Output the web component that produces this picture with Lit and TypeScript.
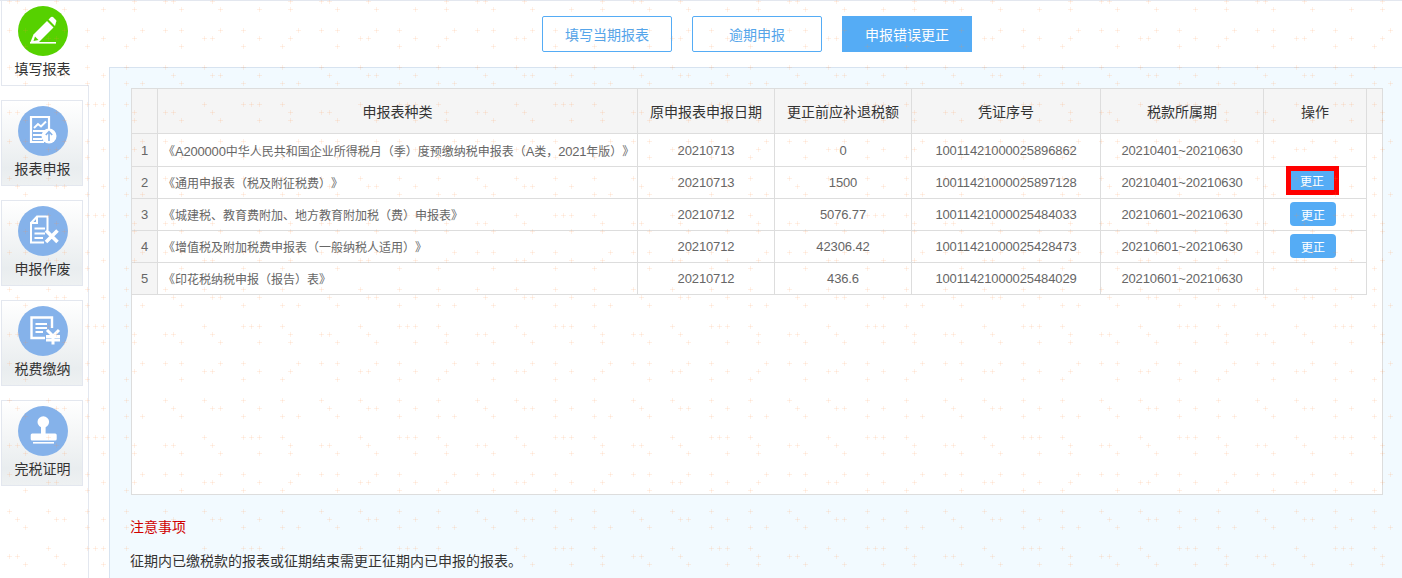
import { LitElement, html, css, svg } from "lit";
import { customElement } from "lit/decorators.js";

const MARKS: [number, number[]][] = [
  [1, [47, 78, 86, 125]],
  [9, [16, 47, 94, 133]],
  [30, [0, 55, 78, 94, 133]],
  [38, [16, 47, 117, 125]],
  [46, [0, 39, 94]],
  [67, [0, 39, 78, 117]],
  [75, [16, 86, 125, 133]],
  [83, [0, 39, 55, 94]],
  [104, [0, 8, 16, 39, 117]],
];

const ICONS = {
  pencil: svg`
    <rect x="12" y="36" width="26" height="1.6" fill="#fff"/>
    <path d="M12.5 36 L15.5 28.5 L29 15 L35.5 21.5 L22 35 L21 36 Z" fill="#fff"/>
    <path d="M30.5 13.5 L33 11 Q34 10.3 35 11 L38.2 14.2 Q38.8 15.2 38 16.2 L37 20 Z" fill="#fff"/>
    <path d="M15.5 35 L17 30.5 L20.5 34 Z" fill="#56d100"/>`,
  report: svg`
    <path d="M26 36 H13 V11 H31 V23" fill="none" stroke="#fff" stroke-width="2.2"/>
    <path d="M16 22 L20 18 L23 20.5 L28 15.5" fill="none" stroke="#fff" stroke-width="2"/>
    <path d="M15 25 H27 M15 29 H24 M15 33 H24" stroke="#fff" stroke-width="1.8"/>
    <circle cx="31" cy="30" r="7.5" fill="#fff"/>
    <path d="M31 35 V26 M27.8 29 L31 25.6 L34.2 29" fill="none" stroke="#85b2ea" stroke-width="1.6"/>`,
  cancel: svg`
    <path d="M13 17 L19 10.5 H29.5 V24 M26 36.5 H13 V17 H19 V10.5" fill="none" stroke="#fff" stroke-width="2"/>
    <path d="M16.5 22.5 H27 M16.5 27.5 H27 M16.5 32 H25" stroke="#fff" stroke-width="2"/>
    <path d="M28 24.5 L39.5 36 M39.5 24.5 L28 36" stroke="#fff" stroke-width="3.6"/>`,
  pay: svg`
    <path d="M27 32 H13.5 V11.5 H34 V22" fill="none" stroke="#fff" stroke-width="2.4"/>
    <path d="M17.5 18 H29 M17.5 22 H29 M17.5 26 H25" stroke="#fff" stroke-width="2"/>
    <path d="M29 24 L35 30 L41 24 M28 30.5 H42 M28 34 H42 M35 30 V38.5" fill="none" stroke="#fff" stroke-width="3"/>`,
  stamp: svg`
    <circle cx="25.3" cy="16" r="5.8" fill="#fff"/>
    <path d="M23 20 H27.6 V28 H23 Z" fill="#fff"/>
    <rect x="12.7" y="27.5" width="26" height="7" rx="1.5" fill="#fff"/>
    <rect x="15" y="36" width="21" height="1.6" fill="#fff"/>`,
};

const TABS = [
  { label: "报表申报", icon: ICONS.report },
  { label: "申报作废", icon: ICONS.cancel },
  { label: "税费缴纳", icon: ICONS.pay },
  { label: "完税证明", icon: ICONS.stamp },
];

const HEAD = ["", "申报表种类", "原申报表申报日期", "更正前应补退税额", "凭证序号", "税款所属期", "操作", ""];

const ROWS = [
  { name: "《A200000中华人民共和国企业所得税月（季）度预缴纳税申报表（A类，2021年版）》", date: "20210713", amt: "0", no: "10011421000025896862", period: "20210401~20210630", op: "" },
  { name: "《通用申报表（税及附征税费）》", date: "20210713", amt: "1500", no: "10011421000025897128", period: "20210401~20210630", op: "marked" },
  { name: "《城建税、教育费附加、地方教育附加税（费）申报表》", date: "20210712", amt: "5076.77", no: "10011421000025484033", period: "20210601~20210630", op: "plain" },
  { name: "《增值税及附加税费申报表（一般纳税人适用）》", date: "20210712", amt: "42306.42", no: "10011421000025428473", period: "20210601~20210630", op: "plain" },
  { name: "《印花税纳税申报（报告）表》", date: "20210712", amt: "436.6", no: "10011421000025484029", period: "20210601~20210630", op: "" },
];

@customElement("app-root")
export class AppRoot extends LitElement {
  static styles = css`
    :host {
      display: block;
      position: relative;
      height: 578px;
      overflow: hidden;
      background: #fff;
      font-family: "Noto Sans CJK SC", sans-serif;
      color: #333;
      text-spacing-trim: space-all;
    }
    .page {
      display: flex;
      height: 578px;
      box-sizing: border-box;
      border-top: 1px solid #e3e7ef;
    }
    .side {
      flex: none;
      box-sizing: border-box;
      width: 89px;
      padding-left: 1px;
      border-right: 1px solid #e3e7ef;
      display: flex;
      flex-direction: column;
      align-items: flex-start;
    }
    .tab {
      box-sizing: border-box;
      display: flex;
      flex-direction: column;
      align-items: center;
      font-size: 14px;
      line-height: 20px;
      color: #333;
    }
    .tab svg { display: block; width: 50px; height: 50px; }
    .tab span { display: block; margin-top: 2px; }
    .tab.on {
      width: 88px;
      height: 85px;
      margin-right: -1px;
      padding: 5px 6px 0 0;
      background: #fff;
      border-left: 1px solid #e3e7ef;
      border-bottom: 1px solid #e3e7ef;
      margin-bottom: 14px;
      position: relative;
    }
    .tab.off {
      width: 82px;
      height: 86px;
      padding: 5px 0 0 1px;
      margin-bottom: 14px;
      border: 1px solid #e3e7ef;
      background: linear-gradient(#fff, #f3f5f6 45%, #e9edef 80%, #eef1f2);
    }
    .main {
      flex: 1;
      min-width: 0;
      margin-left: 20px;
      display: flex;
      flex-direction: column;
    }
    .btns {
      flex: none;
      height: 66px;
      box-sizing: border-box;
      padding: 15px 0 0 3px;
      display: flex;
      justify-content: center;
      gap: 20px;
    }
    .btn {
      box-sizing: border-box;
      width: 130px;
      height: 36px;
      display: flex;
      align-items: center;
      justify-content: center;
      font-size: 14px;
      border: 1px solid #55acf5;
      border-radius: 2px;
      color: #55a5ea;
      background: #fff;
    }
    .btn.on { background: #55acf5; color: #fff; border-radius: 0; }
    .panel {
      flex: 1;
      box-sizing: border-box;
      background: #f2faff;
      border-top: 1px solid #d7e3f0;
      border-left: 1px solid #d7e3f0;
      padding: 20px 19px 0 21px;
    }
    .table {
      box-sizing: border-box;
      width: 1252px;
      height: 407px;
      background: #fff;
      border: 1px solid #ddd;
      display: grid;
      grid-template-columns: 26px 480px 137px 137px 189px 163px 103px 15px;
      grid-template-rows: 45px 33px 32px 32px 32px 32px;
      align-content: start;
    }
    .c {
      box-sizing: border-box;
      border-right: 1px solid #ddd;
      border-bottom: 1px solid #ddd;
      display: flex;
      align-items: center;
      justify-content: center;
      font-size: 12px;
      color: #666;
      white-space: nowrap;
      min-width: 0;
    }
    .c.h {
      background: #f5f5f5;
      color: #333;
      font-size: 14px;
    }
    .c.h.last { border-right: 0; }
    .c.idx { background: #f5f5f5; font-size: 13px; font-family: "Liberation Sans", sans-serif; }
    .c.name { justify-content: flex-start; padding-left: 5px; font-size: 12px; }
    .c.name > div { white-space: nowrap; }
    .lat { font-family: "Liberation Sans", sans-serif; font-size: 13px; letter-spacing: -0.2px; }
    .c.num { font-family: "Liberation Sans", sans-serif; font-size: 13px; letter-spacing: -0.12px; }
    .c.op { padding-right: 4px; }
    .fix {
      box-sizing: border-box;
      width: 46px;
      height: 24px;
      margin-top: -1px;
      display: flex;
      align-items: center;
      justify-content: center;
      background: #55acf5;
      color: #fff;
      font-size: 12px;
      border-radius: 4px;
    }
    .fix.marked {
      width: 53px;
      height: 29px;
      margin-top: 0;
      border: 5px solid #f00;
      border-radius: 0;
      position: relative;
      top: -2px;
      left: -1px;
    }
    .note { margin: 21px 0 0 -1px; font-size: 14px; line-height: 20px; color: #d00000; }
    .text { margin: 14px 0 0 -1px; font-size: 14px; line-height: 20px; color: #333; }
    .wm {
      position: absolute;
      inset: 0;
      width: 1402px;
      height: 578px;
      pointer-events: none;
    }
  `;

  private name(text: string) {
    return html`<div>${text
      .split(/([A-Za-z0-9]+)/)
      .map((part, i) => (i % 2 ? html`<span class="lat">${part}</span>` : part))}</div>`;
  }

  private cell(r: (typeof ROWS)[number], i: number) {
    return html`
      <div class="c idx">${i + 1}</div>
      <div class="c name">${this.name(r.name)}</div>
      <div class="c num">${r.date}</div>
      <div class="c num">${r.amt}</div>
      <div class="c num">${r.no}</div>
      <div class="c num">${r.period}</div>
      <div class="c op">
        ${r.op ? html`<div class="fix ${r.op}">更正</div>` : ""}
      </div>
      <div></div>
    `;
  }

  render() {
    return html`
      <div class="page">
        <div class="side">
          <div class="tab on">
            <svg viewBox="0 0 50 50"><circle cx="25" cy="25" r="25" fill="#56d100"/>${ICONS.pencil}</svg>
            <span>填写报表</span>
          </div>
          ${TABS.map(
            (t) => html`<div class="tab off">
              <svg viewBox="0 0 50 50"><circle cx="25" cy="25" r="25" fill="#85b2ea"/>${t.icon}</svg>
              <span>${t.label}</span>
            </div>`
          )}
        </div>
        <div class="main">
          <div class="btns">
            <div class="btn">填写当期报表</div>
            <div class="btn">逾期申报</div>
            <div class="btn on">申报错误更正</div>
          </div>
          <div class="panel">
            <div class="table">
              ${HEAD.map((h, i) => html`<div class="c h ${i === 7 ? "last" : ""}">${h}</div>`)}
              ${ROWS.map((r, i) => this.cell(r, i))}
            </div>
            <div class="note">注意事项</div>
            <div class="text">征期内已缴税款的报表或征期结束需更正征期内已申报的报表。</div>
          </div>
        </div>
      </div>
      <svg class="wm" viewBox="0 0 1402 578">
        <defs>
          <pattern id="wm" x="84" y="-3" width="156" height="111" patternUnits="userSpaceOnUse">
            ${MARKS.map(([y, xs]) =>
              xs.map(
                (x) => svg`
                  <rect x="${x + 1}" y="${y + 3}" width="5" height="1" fill="#ff8a3c" fill-opacity=".13"/>
                  <rect x="${x + 3}" y="${y + 1}" width="1" height="5" fill="#ff8a3c" fill-opacity=".13"/>`
              )
            )}
          </pattern>
        </defs>
        <rect width="1402" height="578" fill="url(#wm)"/>
      </svg>
    `;
  }
}
